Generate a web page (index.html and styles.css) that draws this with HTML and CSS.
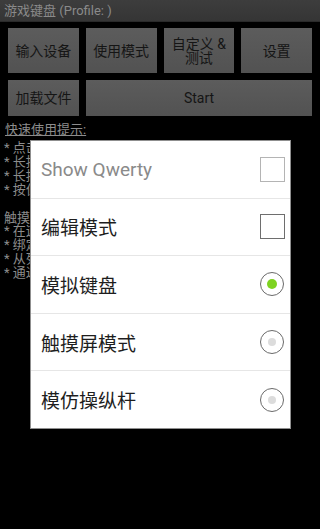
FILE: index.html
```html
<!DOCTYPE html>
<html lang="zh">
<head>
<meta charset="utf-8">
<link rel="stylesheet" href="styles.css">
</head>
<body>
<div class="app">
  <div class="titlebar">游戏键盘 (Profile: )</div>
  <div class="buttons">
    <div class="row row-top">
      <div class="btn">输入设备</div>
      <div class="btn">使用模式</div>
      <div class="btn two">自定义 &amp;<br>测试</div>
      <div class="btn">设置</div>
    </div>
    <div class="row row-bottom">
      <div class="btn">加载文件</div>
      <div class="btn wide">Start</div>
    </div>
  </div>
  <div class="tips">
    <div class="heading">快速使用提示:</div>
    <div class="lines">
      <div>* 点击按键进行编辑</div>
      <div>* 长按按键可以移动位置</div>
      <div>* 长按空白处添加按键</div>
      <div>* 按住菜单键打开菜单</div>
      <div class="blank">&nbsp;</div>
      <div>触摸屏模式:</div>
      <div>* 在这个模式下可以绑定屏幕上的位置(触摸点)</div>
      <div>* 绑定按键到屏幕</div>
      <div>* 从列表中选择</div>
      <div>* 通过按键触发</div>
    </div>
  </div>
</div>

<div class="dialog">
  <div class="item">
    <span class="label disabled">Show Qwerty</span>
    <span class="check disabled-box"></span>
  </div>
  <div class="item">
    <span class="label">编辑模式</span>
    <span class="check"></span>
  </div>
  <div class="item">
    <span class="label">模拟键盘</span>
    <span class="radio on"></span>
  </div>
  <div class="item">
    <span class="label">触摸屏模式</span>
    <span class="radio"></span>
  </div>
  <div class="item last">
    <span class="label">模仿操纵杆</span>
    <span class="radio"></span>
  </div>
</div>
</body>
</html>
```

FILE: styles.css
```css
html, body {
  margin: 0;
  padding: 0;
  background: #000;
  width: 320px;
  height: 529px;
  overflow: hidden;
  font-family: "Roboto", "Noto Sans CJK SC", sans-serif;
}

.app {
  display: flex;
  flex-direction: column;
}

.titlebar {
  height: 21px;
  line-height: 21px;
  background: linear-gradient(#3d3d3d, #353535);
  border-bottom: 1px solid #2a2a2a;
  color: #8a8a8a;
  font-size: 13px;
  padding-left: 4px;
}

.buttons {
  display: flex;
  flex-direction: column;
  gap: 7px;
  padding: 6px 8px 0 8px;
}

.row {
  display: flex;
  gap: 7px;
}

.row-top .btn {
  height: 45px;
}

.row-bottom .btn {
  height: 36px;
}

.btn {
  width: 71px;
  background: linear-gradient(#5c5c5c, #525252);
  color: #151515;
  font-size: 14px;
  display: flex;
  align-items: center;
  justify-content: center;
  text-align: center;
  line-height: 14px;
}

.btn.wide {
  flex: 1;
  width: auto;
}

.tips {
  padding: 7px 0 0 4px;
  color: #8c8c8c;
  font-size: 13px;
}

.heading {
  line-height: 14px;
  text-decoration: underline;
  padding-left: 1px;
}

.lines {
  margin-top: 4px;
  line-height: 13.9px;
  white-space: nowrap;
}

.dialog {
  position: absolute;
  left: 30px;
  top: 140px;
  width: 259px;
  height: 287px;
  background: #fff;
  border: 1px solid #8f8f8f;
  display: flex;
  flex-direction: column;
}

.item {
  flex: 1;
  display: flex;
  align-items: center;
  justify-content: space-between;
  padding: 0 5px 0 10px;
  border-bottom: 1px solid #e6e6e6;
}

.item.last {
  border-bottom: none;
}

.label {
  font-size: 19px;
  color: #1e1e1e;
}

.label.disabled {
  color: #8a8a8a;
  font-size: 19px;
}

.check {
  width: 23px;
  height: 23px;
  border: 1px solid #6e6e6e;
}

.check.disabled-box {
  border-color: #b4b4b4;
}

.radio {
  width: 22px;
  height: 22px;
  border: 1.5px solid #6a6a6a;
  border-radius: 50%;
  display: flex;
  align-items: center;
  justify-content: center;
  margin-right: 1px;
}

.radio::after {
  content: "";
  width: 8px;
  height: 8px;
  border-radius: 50%;
  background: #dcdcdc;
}

.radio.on::after {
  width: 10px;
  height: 10px;
  background: #7ed321;
}
```
